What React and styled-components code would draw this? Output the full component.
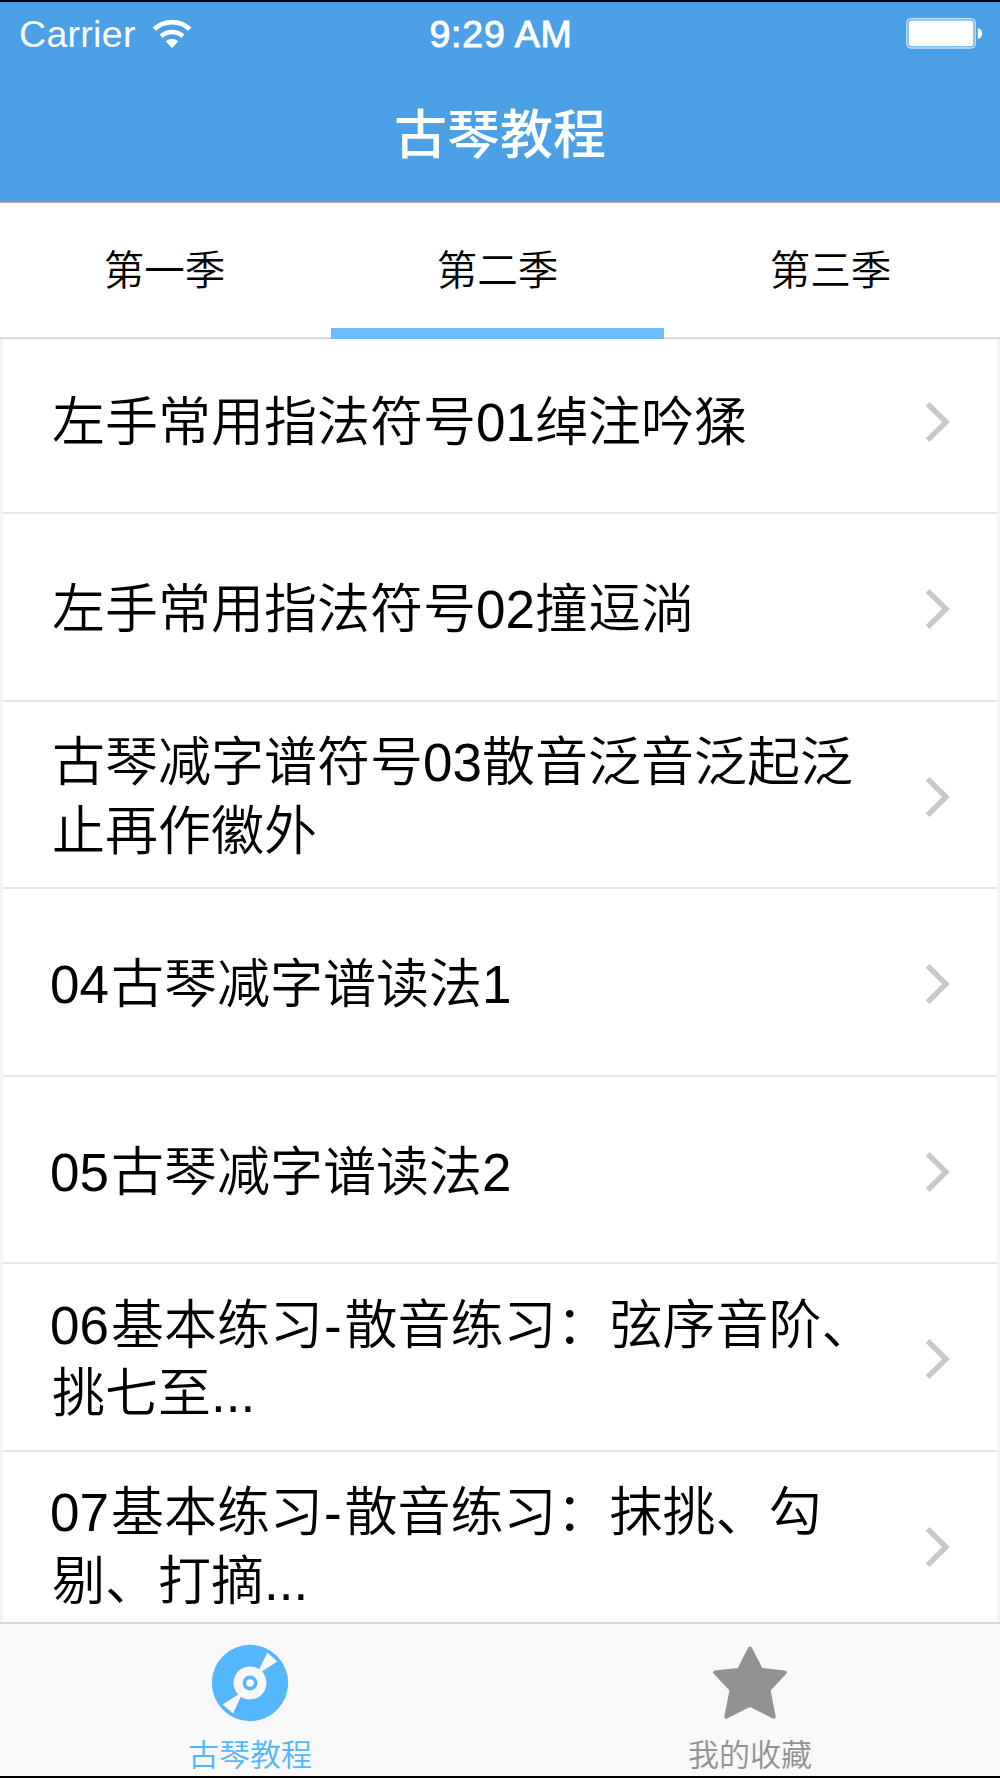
import styled, { createGlobalStyle } from "styled-components"

const GlobalStyle = createGlobalStyle`
    * {
        box-sizing: border-box;
    }
    body {
        margin: 0;
        background-color: white;
        font-family: "Liberation Sans", "Noto Sans CJK SC", sans-serif;
    }
`;

const Screen = styled.div`
    width: 1000px;
    height: 1778px;
    display: flex;
    flex-direction: column;
    overflow: hidden;
    border-top: 2px solid black;
    border-bottom: 2px solid black;
    background-color: white;
`;

const Header = styled.header`
    height: 201px;
    flex: none;
    color: white;
    background-color: #4ca0e5;
    border-bottom: 1px solid #b0b0b4;
`;

const StatusBar = styled.div`
    height: 63px;
    display: grid;
    grid-template-columns: 1fr auto 1fr;
    align-items: center;
    padding: 0 17px 0 19px;
    font-size: 37.5px;
    line-height: 61px;
`;

const Carrier = styled.div`
    display: flex;
    align-items: center;
    gap: 16px;
`;

const CarrierName = styled.span`
    padding-top: 2px;
    letter-spacing: 0.3px;
`;

const Time = styled.div`
    padding-top: 2px;
    letter-spacing: 0.8px;
    -webkit-text-stroke: 1px white;
`;

const Battery = styled.svg`
    justify-self: end;
`;

const Title = styled.h1`
    margin: 0;
    padding-top: 32px;
    font-size: 53px;
    font-weight: 500;
    line-height: 78px;
    text-align: center;
`;

const Tabs = styled.nav`
    height: 136px;
    flex: none;
    display: flex;
    margin: 0 -1px 0 -2px;
    background-color: white;
    box-shadow: inset 0 -1.5px 0 #cfcfcf;
`;

const Tab = styled.div`
    width: 333px;
    padding-top: 3px;
    font-size: 40.6px;
    font-weight: 350;
    line-height: 131px;
    text-align: center;
    border-bottom: ${(props) => (props.$active ? "11px solid #6dbcfc" : "none")};
`;

const List = styled.main`
    flex: 1;
    min-height: 0;
    overflow: hidden;
    border-left: 3px solid #f4f4f4;
    border-right: 3px solid #f4f4f4;
`;

/* the list is scrolled a little, its first row starts under the tabs */
const Rows = styled.div`
    margin-top: -12.5px;
`;

const Row = styled.div`
    height: 187.5px;
    display: flex;
    align-items: center;
    justify-content: space-between;
    padding: 5px 46px 0 49px;
    border-bottom: 2px solid #e6e6e6;
`;

const RowText = styled.div`
    padding-top: 2px;
    font-size: 53px;
    font-weight: 350;
    line-height: 68.5px;
`;

const Line = styled.div`
    white-space: nowrap;
`;

const Num = styled.span`
    margin: 0 2px 0 -2px;
`;

const Dash = styled.span`
    padding: 0 3px 0 1px;
`;

const TabBar = styled.footer`
    height: 154px;
    flex: none;
    display: flex;
    border-top: 2px solid #dadada;
    background-color: #f8f8f8;
`;

const TabBarItem = styled.div`
    flex: 1;
    display: flex;
    flex-direction: column;
    align-items: center;
    padding-top: 20px;
    font-size: 31px;
    font-weight: 350;
    line-height: 36px;
    color: ${(props) => props.$color};
`;

const TabBarLabel = styled.span`
    margin-top: 16px;
`;

const seasons = ["第一季", "第二季", "第三季"];

const lessons = [
    { lines: ["左手常用指法符号01绰注吟猱"] },
    { lines: ["左手常用指法符号02撞逗淌"] },
    { lines: ["古琴减字谱符号03散音泛音泛起泛", "止再作徽外"] },
    { num: "04", lines: ["古琴减字谱读法1"] },
    { num: "05", lines: ["古琴减字谱读法2"] },
    { num: "06", lines: ["基本练习-散音练习：弦序音阶、", "挑七至..."] },
    { num: "07", lines: ["基本练习-散音练习：抹挑、勾", "剔、打摘..."] },
];

function WifiIcon() {
    return (
        <svg width="40" height="30" viewBox="0 0 40 30" fill="none" stroke="white" strokeWidth="4.6">
            <path d="M2.3 10.2A25.7 25.7 0 0 1 37.7 10.2" />
            <path d="M9.1 17.3A16 16 0 0 1 30.9 17.3" />
            <path d="M20 29L13.6 22.2A9.3 9.3 0 0 1 26.4 22.2Z" fill="white" stroke="none" />
        </svg>
    );
}

function BatteryIcon() {
    return (
        <Battery width="77" height="31" viewBox="0 0 77 31">
            <rect x="0.8" y="0.8" width="68.4" height="29.2" rx="4.5" fill="none" stroke="white" strokeOpacity="0.7" strokeWidth="1.4" />
            <rect x="2.6" y="2.6" width="64.8" height="25.6" rx="2.5" fill="white" />
            <path d="M71.8 10C77.6 11 77.6 20 71.8 21Z" fill="white" />
        </Battery>
    );
}

function Chevron() {
    return (
        <svg width="26" height="42" viewBox="0 0 26 42" fill="none" stroke="#c7c7cc" strokeWidth="5.4">
            <path d="M2.6 2.8L21 21L2.6 39.2" />
        </svg>
    );
}

function DiscIcon() {
    return (
        <svg width="78" height="78" viewBox="-39 -39 78 78">
            <circle r="38.2" fill="#54b7fe" />
            <path d="M17.4 -30.4L27.4 -21.4L11 -11L8.5 -12.5Z" fill="#f8f8f8" />
            <path d="M-17 30.4L-27.4 21.4L-11 11L-8.5 12.5Z" fill="#f8f8f8" />
            <circle r="16.5" fill="#f8f8f8" />
            <circle r="5.6" fill="none" stroke="#54b7fe" strokeWidth="3.6" />
        </svg>
    );
}

function StarIcon() {
    return (
        <svg width="78" height="78" viewBox="0 0 78 78">
            <path
                d="M39 4.5L49.5 25Q50 25.8 51 25.9L73.8 28.5L58.8 44.5Q57.5 46 57.8 48L62.7 72.6L41 61.8Q39 60.8 37 61.8L15.3 72.6L20.2 48Q20.5 46 19.2 44.5L4.2 28.5L27 25.9Q28 25.8 28.5 25Z"
                fill="#929292"
                stroke="#929292"
                strokeWidth="4"
                strokeLinejoin="round"
            />
        </svg>
    );
}

function LessonRow({ num, lines }) {
    return (
        <Row>
            <RowText>
                {lines.map((line, index) => {
                    const [start, rest] = line.split("-");

                    return (
                        <Line key={line}>
                            {num && index === 0 && <Num>{num}</Num>}
                            {start}
                            {rest && <Dash>-</Dash>}
                            {rest}
                        </Line>
                    );
                })}
            </RowText>
            <Chevron />
        </Row>
    );
}

export default function App() {
    return (
        <>
            <GlobalStyle />
            <Screen>
                <Header>
                    <StatusBar>
                        <Carrier>
                            <CarrierName>Carrier</CarrierName>
                            <WifiIcon />
                        </Carrier>
                        <Time>9:29 AM</Time>
                        <BatteryIcon />
                    </StatusBar>
                    <Title>古琴教程</Title>
                </Header>

                <Tabs>
                    {seasons.map((season, index) => (
                        <Tab key={season} $active={index === 1}>{season}</Tab>
                    ))}
                </Tabs>

                <List>
                    <Rows>
                        {lessons.map((lesson) => (
                            <LessonRow key={lesson.lines[0]} num={lesson.num} lines={lesson.lines} />
                        ))}
                    </Rows>
                </List>

                <TabBar>
                    <TabBarItem $color="#54b7fe">
                        <DiscIcon />
                        <TabBarLabel>古琴教程</TabBarLabel>
                    </TabBarItem>
                    <TabBarItem $color="#929292">
                        <StarIcon />
                        <TabBarLabel>我的收藏</TabBarLabel>
                    </TabBarItem>
                </TabBar>
            </Screen>
        </>
    );
}
